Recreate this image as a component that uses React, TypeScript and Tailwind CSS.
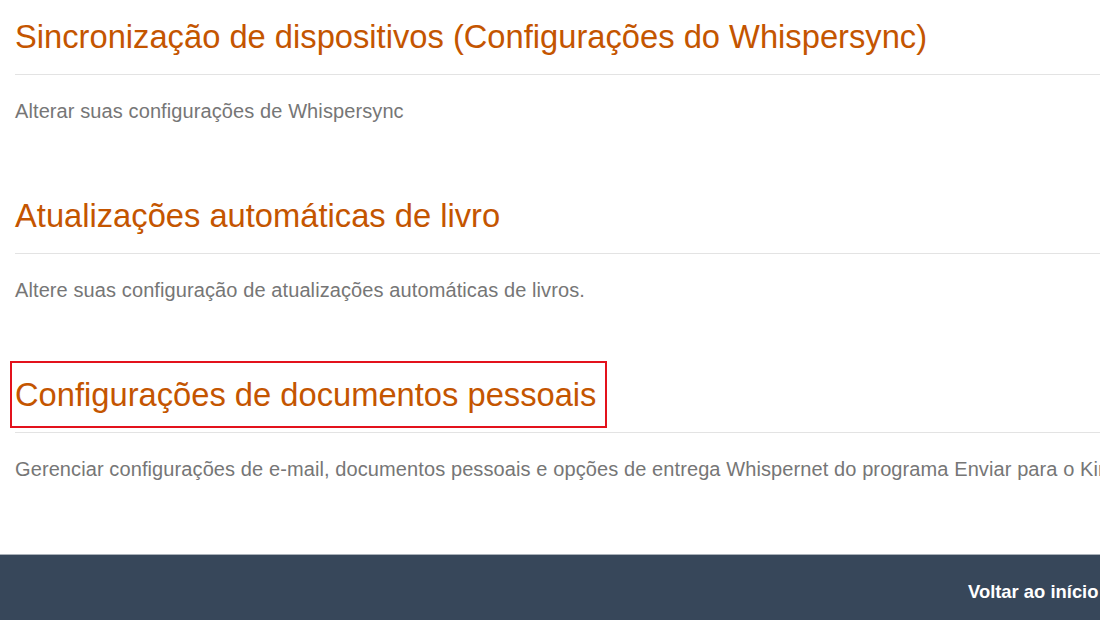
import React from "react";

type Section = {
  title: string;
  description: string;
  highlighted?: boolean;
};

const sections: Section[] = [
  {
    title: "Sincronização de dispositivos (Configurações do Whispersync)",
    description: "Alterar suas configurações de Whispersync",
  },
  {
    title: "Atualizações automáticas de livro",
    description: "Altere suas configuração de atualizações automáticas de livros.",
  },
  {
    title: "Configurações de documentos pessoais",
    description:
      "Gerenciar configurações de e-mail, documentos pessoais e opções de entrega Whispernet do programa Enviar para o Kindle.",
    highlighted: true,
  },
];

function SettingsSection({ title, description, highlighted }: Section) {
  return (
    <section className="mb-[73px]">
      <div className="relative">
        <h2 className="text-[32.7px] leading-[40px] font-normal text-[#c45500] whitespace-nowrap">
          {title}
        </h2>
        {highlighted && (
          <span className="pointer-events-none absolute left-[-5px] top-[-14px] h-[67px] w-[597px] border-2 border-[#e3121c]" />
        )}
      </div>
      <div className="mt-[17px] h-px bg-[#e3e3e3]" />
      <p className="mt-[24px] text-[20px] leading-[24px] text-[#767676] whitespace-nowrap tracking-[0.1px]">
        {description}
      </p>
    </section>
  );
}

export default function App() {
  return (
    <div
      className="h-[620px] w-[1100px] overflow-hidden bg-white"
      style={{ fontFamily: '"Liberation Sans", Arial, sans-serif' }}
    >
      <div className="w-[1260px]">
        <main className="pl-[15px] pt-[17px]">
          {sections.map((s) => (
            <SettingsSection key={s.title} {...s} />
          ))}
        </main>
        <footer className="h-[80px] border-t border-[#aab1b9] bg-[#37475a] pl-[968px] pt-[25px]">
          <a className="text-[18.4px] font-bold leading-[24px] text-white whitespace-nowrap">
            Voltar ao início
          </a>
        </footer>
      </div>
    </div>
  );
}
